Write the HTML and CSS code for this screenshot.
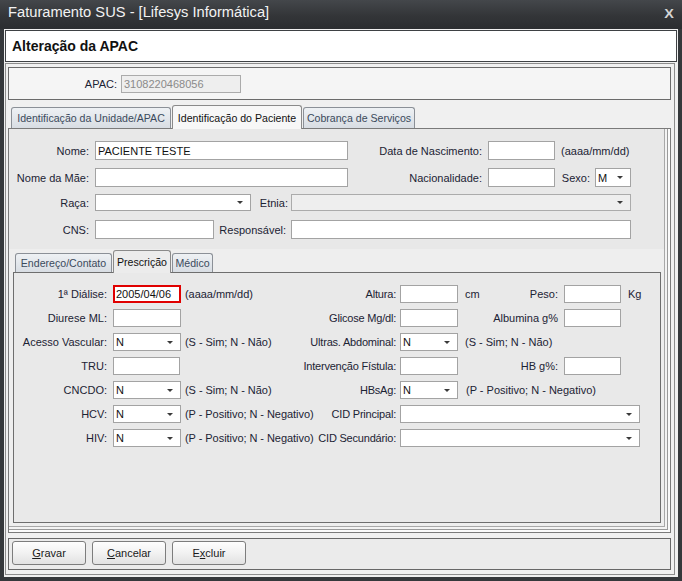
FILE: index.html
```html
<!DOCTYPE html>
<html lang="pt-BR">
<head>
<meta charset="utf-8">
<title>Faturamento SUS</title>
<link rel="stylesheet" href="styles.css">
</head>
<body>
<div class="window">
  <div class="titlebar">
    <span class="title">Faturamento SUS - [Lifesys Informática]</span>
    <span class="close">X</span>
  </div>
  <div class="client">
    <div class="header">Alteração da APAC</div>
    <div class="main">
      <div class="apac-box">
        <span class="lab apac-lab">APAC:</span>
        <div class="field disabled apac-input">3108220468056</div>
      </div>

      <div class="tabs outer-tabs">
        <div class="tab t1">Identificação da Unidade/APAC</div>
        <div class="tab active t2">Identificação do Paciente</div>
        <div class="tab t3">Cobrança de Serviços</div>
      </div>

      <div class="tab-body">
        <div class="patient">
          <div class="prow r1">
            <span class="lab pl1">Nome:</span>
            <div class="field w253">PACIENTE TESTE</div>
            <span class="lab pl2">Data de Nascimento:</span>
            <div class="field w67"></div>
            <span class="note pn">(aaaa/mm/dd)</span>
          </div>
          <div class="prow r2">
            <span class="lab pl1">Nome da Mãe:</span>
            <div class="field w253"></div>
            <span class="lab pl2">Nacionalidade:</span>
            <div class="field w67"></div>
            <span class="lab sexo">Sexo:</span>
            <div class="field sel w36"><span>M</span><span class="arrow"></span></div>
          </div>
          <div class="prow r3">
            <span class="lab pl1">Raça:</span>
            <div class="field sel short w156"><span></span><span class="arrow"></span></div>
            <span class="lab etnia">Etnia:</span>
            <div class="field sel short disabled w340"><span></span><span class="arrow"></span></div>
          </div>
          <div class="prow r4">
            <span class="lab pl1">CNS:</span>
            <div class="field w119"></div>
            <span class="lab resp">Responsável:</span>
            <div class="field w340"></div>
          </div>
        </div>

        <div class="tabs inner-tabs">
          <div class="tab small i1">Endereço/Contato</div>
          <div class="tab small active i2">Prescrição</div>
          <div class="tab small i3">Médico</div>
        </div>

        <div class="inner-body">
          <div class="rrow">
            <span class="lab c1">1ª Diálise:</span>
            <div class="field f68 alert">2005/04/06</div>
            <span class="note n1">(aaaa/mm/dd)</span>
            <span class="lab c2">Altura:</span>
            <div class="field f58"></div>
            <span class="note mid">cm</span>
            <span class="lab c3">Peso:</span>
            <div class="field f57"></div>
            <span class="note u3">Kg</span>
          </div>
          <div class="rrow">
            <span class="lab c1">Diurese ML:</span>
            <div class="field f68"></div>
            <span class="note n1"></span>
            <span class="lab c2">Glicose Mg/dl:</span>
            <div class="field f58"></div>
            <span class="note mid"></span>
            <span class="lab c3">Albumina g%</span>
            <div class="field f57"></div>
          </div>
          <div class="rrow">
            <span class="lab c1">Acesso Vascular:</span>
            <div class="field sel f68"><span>N</span><span class="arrow"></span></div>
            <span class="note n1">(S - Sim; N - Não)</span>
            <span class="lab c2">Ultras. Abdominal:</span>
            <div class="field sel f58"><span>N</span><span class="arrow"></span></div>
            <span class="note mid">(S - Sim; N - Não)</span>
          </div>
          <div class="rrow">
            <span class="lab c1">TRU:</span>
            <div class="field f67"></div>
            <span class="note n1 n1b"></span>
            <span class="lab c2">Intervenção Fístula:</span>
            <div class="field f58"></div>
            <span class="note mid"></span>
            <span class="lab c3">HB g%:</span>
            <div class="field f57"></div>
          </div>
          <div class="rrow">
            <span class="lab c1">CNCDO:</span>
            <div class="field sel f68"><span>N</span><span class="arrow"></span></div>
            <span class="note n1">(S - Sim; N - Não)</span>
            <span class="lab c2">HBsAg:</span>
            <div class="field sel f58"><span>N</span><span class="arrow"></span></div>
            <span class="note mid mid-wide">(P - Positivo; N - Negativo)</span>
          </div>
          <div class="rrow">
            <span class="lab c1">HCV:</span>
            <div class="field sel f68"><span>N</span><span class="arrow"></span></div>
            <span class="note n1">(P - Positivo; N - Negativo)</span>
            <span class="lab c2">CID Principal:</span>
            <div class="field sel f240"><span></span><span class="arrow"></span></div>
          </div>
          <div class="rrow">
            <span class="lab c1">HIV:</span>
            <div class="field sel f68"><span>N</span><span class="arrow"></span></div>
            <span class="note n1">(P - Positivo; N - Negativo)</span>
            <span class="lab c2">CID Secundário:</span>
            <div class="field sel f240"><span></span><span class="arrow"></span></div>
          </div>
        </div>
      </div>

      <div class="buttons">
        <div class="btn"><span><u>G</u>ravar</span></div>
        <div class="btn"><span><u>C</u>ancelar</span></div>
        <div class="btn"><span>E<u>x</u>cluir</span></div>
      </div>
    </div>
  </div>
</div>
</body>
</html>
```

FILE: styles.css
```css
* { box-sizing: border-box; }

html, body {
  margin: 0;
  padding: 0;
}

body {
  width: 682px;
  height: 581px;
  overflow: hidden;
  background: #35383b;
  font-family: "Liberation Sans", Arial, sans-serif;
  font-size: 11px;
  color: #1c2334;
}

.window {
  width: 682px;
  height: 581px;
  display: flex;
  flex-direction: column;
  background: #35383b;
}

/* title bar */
.titlebar {
  height: 29px;
  flex: none;
  display: flex;
  justify-content: space-between;
  align-items: flex-start;
  padding: 0 9px 0 8px;
  background: linear-gradient(#44474b, #333538 55%, #2b2d30);
  color: #f2f2f2;
}

.title {
  font-size: 14.7px;
  line-height: 25px;
}

.close {
  font-weight: bold;
  font-size: 12px;
  line-height: 12px;
  margin-top: 8px;
  color: #d4d4d4;
  transform: scaleX(1.2);
}

/* client area */
.client {
  flex: 1;
  margin: 0 4px 4px;
  padding: 1px 1px 0;
  background: #f0f0f0;
  display: flex;
  flex-direction: column;
}

.header {
  height: 32px;
  flex: none;
  border: 1px solid #3e4144;
  background: #ffffff;
  font-weight: bold;
  font-size: 14px;
  color: #111111;
  display: flex;
  align-items: center;
  padding-left: 6px;
}

.main {
  margin: 1px 2px 0 0;
  border: 1px solid #8d8d8d;
  padding: 3px 3px 4px 2px;
}

/* apac box */
.apac-box {
  height: 33px;
  border: 1px solid #6b6b6b;
  background: #f5f5f5;
  display: flex;
  align-items: center;
}

.lab {
  flex: none;
  display: flex;
  justify-content: flex-end;
  white-space: nowrap;
}

.apac-lab {
  width: 108px;
  margin-right: 4px;
}

.field {
  flex: none;
  height: 19px;
  border: 1px solid #a3a3a3;
  background: #ffffff;
  color: #111111;
  padding-left: 2px;
  display: flex;
  align-items: center;
  white-space: nowrap;
  overflow: hidden;
}

.field.disabled {
  background: #eeeeee;
  border-color: #ababab;
}

.apac-input {
  width: 120px;
  height: 18px;
  color: #8a8a8a;
}

.sel {
  justify-content: space-between;
  padding-right: 7px;
}

.arrow {
  width: 0;
  height: 0;
  border-left: 3px solid transparent;
  border-right: 3px solid transparent;
  border-top: 3px solid #3a3a3a;
}

.note {
  flex: none;
  white-space: nowrap;
}

/* tabs */
.tabs {
  display: flex;
  align-items: flex-end;
  gap: 1px;
}

.outer-tabs {
  height: 23px;
  margin-top: 5px;
  padding-left: 3px;
}

.tab {
  flex: none;
  height: 21px;
  border: 1px solid #8b9097;
  border-bottom: none;
  border-radius: 3px 3px 0 0;
  background: linear-gradient(#eef1f4, #d8dde3);
  color: #3b4a5c;
  display: flex;
  align-items: center;
  justify-content: center;
  white-space: nowrap;
  font-size: 10.6px;
}

.tab.active {
  height: 24px;
  margin-bottom: -1px;
  background: #f7f7f7;
  color: #111111;
  border-color: #8a8a8a;
  position: relative;
  z-index: 1;
}

.t1 { width: 160px; }
.t2 { width: 130px; }
.t3 { width: 112px; }

.tab.small { height: 19px; }
.tab.small.active { height: 23px; background: #ececec; }
.i1 { width: 97px; }
.i2 { width: 58px; }
.i3 { width: 41px; }

.tab-body {
  height: 405px;
  border: 1px solid #7a7a7a;
  background: #eeeeee;
  display: flex;
  flex-direction: column;
  box-shadow: inset -2px -2px 0 #fafafa, inset -3px -3px 0 #9a9a9a, inset -5px -5px 0 #f3f3f3, inset -6px -6px 0 #a8a8a8;
}

/* patient fields */
.patient {
  height: 120px;
  flex: none;
  margin-right: 6px;
  background: #e8e8e8;
  padding-top: 12px;
}

.prow {
  display: flex;
  align-items: center;
  height: 19px;
}

.r1 { margin-bottom: 8px; }
.r2 { margin-bottom: 6px; }
.r3 { margin-bottom: 8px; }

.pl1 { width: 80px; margin-right: 6px; }
.pl2 { width: 134px; margin-right: 6px; }
.pn { margin-left: 6px; }
.sexo { width: 35px; margin-right: 5px; }
.etnia { width: 37px; margin-right: 3px; }
.resp { width: 72px; margin-right: 5px; }

.w253 { width: 253px; }
.w67 { width: 67px; }
.w36 { width: 36px; }
.w156 { width: 156px; }
.w340 { width: 340px; }
.w119 { width: 119px; }

.field.short { height: 17px; }

/* inner tabbed pane */
.inner-tabs {
  height: 23px;
  flex: none;
  padding-left: 6px;
}

.inner-body {
  margin-left: 4px;
  width: 648px;
  height: 251px;
  flex: none;
  border: 1px solid #6e6e6e;
  background: #e9e9e9;
  padding-top: 12px;
}

.rrow {
  display: flex;
  align-items: center;
  height: 18px;
  margin-bottom: 6px;
}

.rrow .field { height: 18px; }

.c1 { width: 93px; margin-right: 6px; }
.c2 { width: 80px; margin-right: 4px; letter-spacing: -0.2px; }
.c3 { width: 60px; margin-right: 6px; }
.n1 { width: 135px; padding-left: 4px; letter-spacing: -0.05px; }
.n1b { width: 136px; }
.mid { width: 40px; padding-left: 7px; }
.mid-wide { padding-left: 8px; }
.u3 { padding-left: 7px; }

.f68 { width: 68px; }
.f67 { width: 67px; }
.f58 { width: 58px; }
.f57 { width: 57px; }
.f240 { width: 240px; }

.field.alert {
  border: 2px solid #e00000;
  padding-left: 1px;
}

/* buttons */
.buttons {
  margin-top: 5px;
  height: 32px;
  border: 1px solid #676767;
  background: #ebebeb;
  padding: 2px 3px;
  display: flex;
  gap: 6px;
}

.btn {
  width: 74px;
  height: 24px;
  border: 1px solid #7d7d7d;
  border-radius: 3px;
  background: linear-gradient(#fefefe, #f3f3f3 45%, #e2e2e2);
  display: flex;
  align-items: center;
  justify-content: center;
  color: #1a1a1a;
}
```
